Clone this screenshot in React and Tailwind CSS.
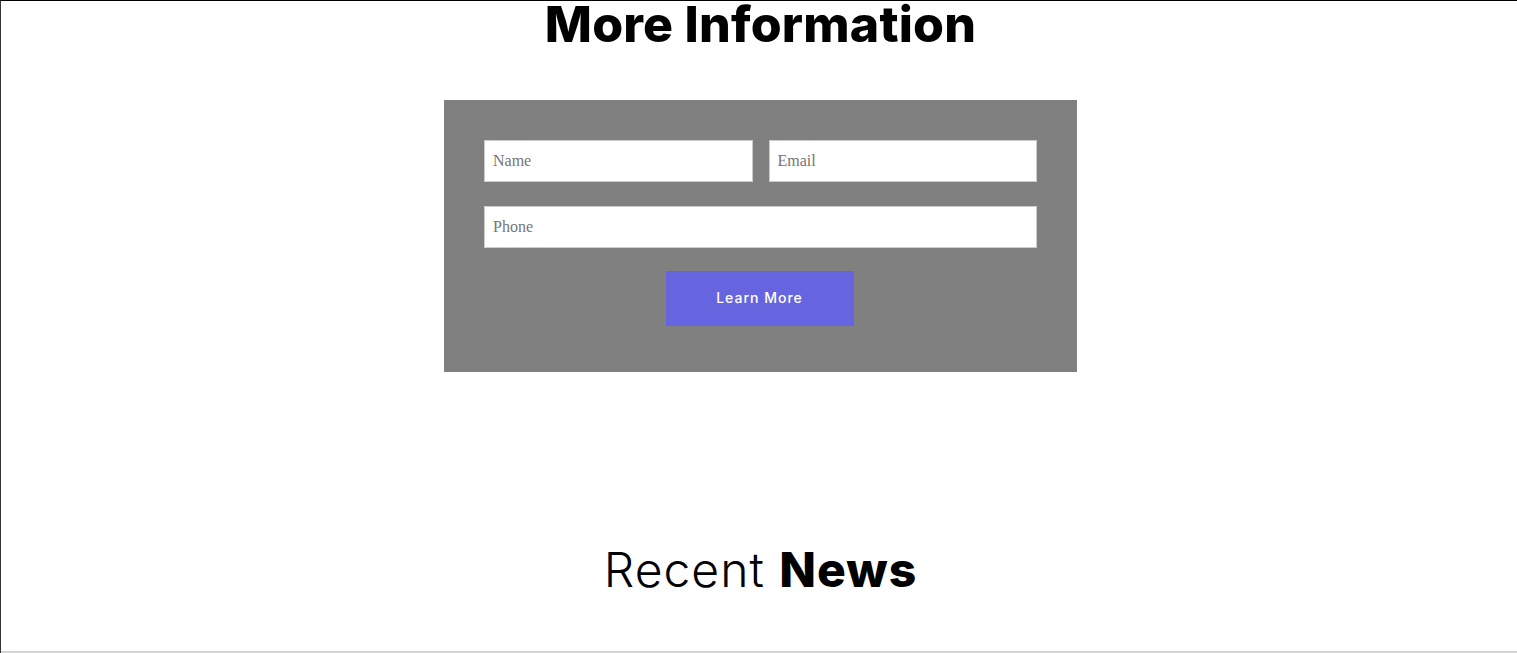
import React from 'react';

const Field = ({ placeholder, className = '' }) => (
    <input
        type="text"
        placeholder={placeholder}
        className={`h-[42px] bg-white border border-[#cccccc] px-2 text-base text-[#333] placeholder:text-[#757575] font-['Liberation_Serif',serif] outline-none ${className}`}
    />
);

const App = () => {
    return (
        <div className="w-full h-[653px] bg-white border-t border-l border-t-black border-l-[#3a3333] pl-[3px] flex flex-col font-['Inter',sans-serif] overflow-hidden">
            {/* More Information */}
            <h2 className="text-center text-[50px] leading-[46px] font-extrabold text-black tracking-[0.2px]">More Information</h2>

            <div className="w-[633px] mx-auto mt-[53px] bg-[#808080] px-10 pt-10 pb-[46px]">
                <div className="grid grid-cols-2 gap-4">
                    <Field placeholder="Name" />
                    <Field placeholder="Email" />
                </div>
                <Field placeholder="Phone" className="w-full mt-6" />
                <div className="flex justify-center mt-[23px] pr-[2px]">
                    <button className="w-[188px] h-[55px] bg-[#6764e0] text-white text-sm font-medium tracking-[1px] pb-[1px]">Learn More</button>
                </div>
            </div>

            {/* Recent News */}
            <h2 className="text-center text-[48px] leading-[56px] text-black mt-[170px] tracking-[1px]">
                <span className="font-light">Recent </span>
                <span className="font-extrabold">News</span>
            </h2>

            <div className="mt-auto -ml-[3px] h-[2px] bg-[#d4d4d4]"></div>
        </div>
    );
};

export default App;
